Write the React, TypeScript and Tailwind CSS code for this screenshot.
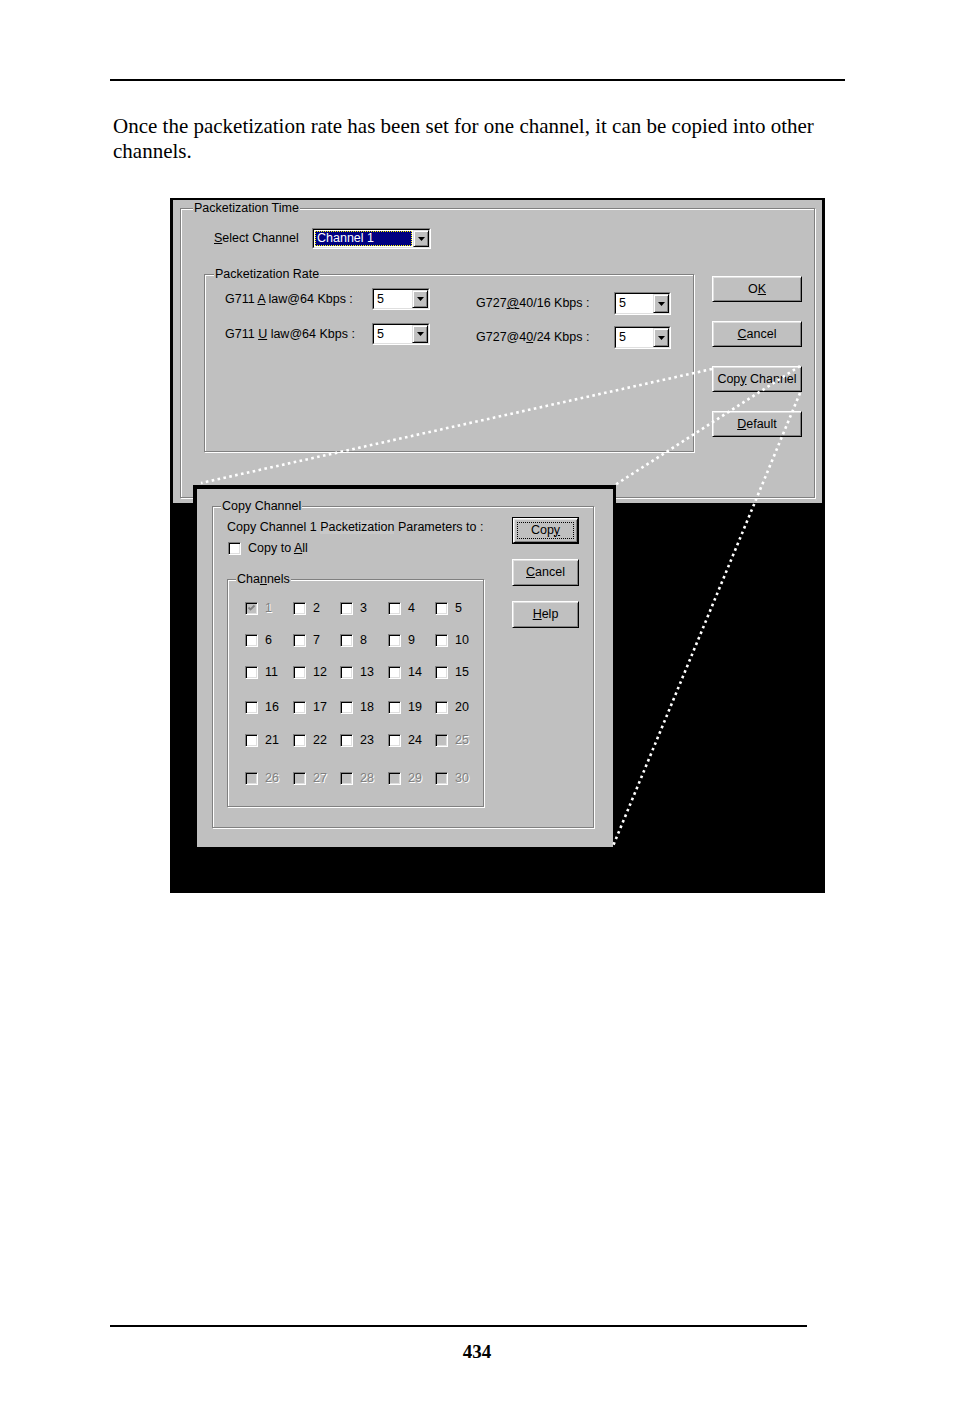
import React from 'react';

const ui = "font-['Liberation_Sans',Arial,sans-serif] text-[12.5px] leading-[15px] text-black";

function U({ children }: { children: React.ReactNode }) {
  return <span className="underline underline-offset-[1px] decoration-1">{children}</span>;
}

function Group({
  title,
  className,
  legendClass,
  children,
}: {
  title: React.ReactNode;
  className: string;
  legendClass: string;
  children?: React.ReactNode;
}) {
  return (
    <div className={`border border-[#808080] shadow-[1px_1px_0_#fff,inset_1px_1px_0_#fff] ${className}`}>
      <div className={`-mt-[8px] w-fit px-[1px] bg-[#c0c0c0] leading-[15px] ${legendClass}`}>{title}</div>
      {children}
    </div>
  );
}

function Face({ children, className }: { children: React.ReactNode; className: string }) {
  return (
    <div
      className={`flex items-center justify-center bg-[#c0c0c0] border border-t-white border-l-white border-b-black border-r-black shadow-[inset_1px_1px_0_#dfdfdf,inset_-1px_-1px_0_#808080] ${className}`}
    >
      {children}
    </div>
  );
}

function Btn({ children, size, def }: { children: React.ReactNode; size: string; def?: boolean }) {
  if (def) {
    return (
      <div className={`flex border border-black ${size}`}>
        <Face className="flex-1">
          <div className="flex-1 self-stretch m-[3px] border border-dotted border-black flex items-center justify-center">
            <span className="whitespace-nowrap">{children}</span>
          </div>
        </Face>
      </div>
    );
  }
  return (
    <Face className={size}>
      <span className="whitespace-nowrap">{children}</span>
    </Face>
  );
}

function DropBtn() {
  return (
    <div className="w-[16px] self-stretch flex items-center justify-center bg-[#c0c0c0] border border-t-[#dfdfdf] border-l-[#dfdfdf] border-b-black border-r-black shadow-[inset_1px_1px_0_#fff,inset_-1px_-1px_0_#808080]">
      <svg width="7" height="4" viewBox="0 0 7 4">
        <polygon points="0,0 7,0 3.5,4" fill="#000" />
      </svg>
    </div>
  );
}

function Sunken({ size, children }: { size: string; children: React.ReactNode }) {
  return (
    <div className={`flex border border-t-[#808080] border-l-[#808080] border-b-white border-r-white ${size}`}>
      <div className="flex flex-1 border border-t-black border-l-black border-b-[#dfdfdf] border-r-[#dfdfdf] bg-white">
        {children}
      </div>
    </div>
  );
}

function Combo({ value, size }: { value: string; size: string }) {
  return (
    <Sunken size={size}>
      <div className="flex-1 flex items-center pl-[3px]">{value}</div>
      <DropBtn />
    </Sunken>
  );
}

function Check({ checked, disabled }: { checked?: boolean; disabled?: boolean }) {
  return (
    <span
      className={`w-[13px] h-[13px] shrink-0 flex items-center justify-center border border-t-[#808080] border-l-[#808080] border-b-white border-r-white shadow-[inset_1px_1px_0_#000,inset_-1px_-1px_0_#dfdfdf] ${
        disabled ? 'bg-[#c0c0c0]' : 'bg-white'
      }`}
    >
      {checked && (
        <svg width="9" height="9" viewBox="0 0 9 9">
          <path d="M1.5 3.5 L3.5 5.5 L7.5 1.5" stroke={disabled ? '#808080' : '#000'} strokeWidth="1.8" fill="none" />
        </svg>
      )}
    </span>
  );
}

const rate = [
  { label: <>G711 <U>A</U> law@64 Kbps :</>, value: '5' },
  { label: <>G711 <U>U</U> law@64 Kbps :</>, value: '5' },
];

const rate2 = [
  { label: <>G727<U>@</U>40/16 Kbps :</>, value: '5' },
  { label: <>G727@4<U>0</U>/24 Kbps :</>, value: '5' },
];

const channels = Array.from({ length: 30 }, (_, i) => i + 1);

export default function App() {
  return (
    <div className="w-[954px] h-[1409px] bg-white overflow-hidden">
      <div className="pt-[79px] pl-[110px]">
        <div className="w-[735px] h-[2px] bg-black" />
      </div>

      <p className="ml-[113px] mt-[33px] w-[735px] font-['Liberation_Serif','Times_New_Roman',serif] text-[21px] leading-[25px] text-black">
        Once the packetization rate has been set for one channel, it can be copied into other channels.
      </p>

      {/* screenshot */}
      <div className={`relative ml-[170px] mt-[34px] w-[655px] h-[695px] bg-black overflow-hidden ${ui}`}>
        {/* main dialog */}
        <div className="ml-[3px] mt-[2px] w-[649px] h-[303px] bg-[#c0c0c0] pt-[8px] pl-[7px]">
          <Group title="Packetization Time" className="w-[635px] h-[290px]" legendClass="ml-[12px]">
            <div className="mt-[12px] pl-[33px] flex items-center">
              <div className="w-[98px]">
                <U>S</U>elect Channel
              </div>
              <Sunken size="w-[119px] h-[21px]">
                <div className="flex-1 flex p-[1px]">
                  <div className="flex-1 flex items-center bg-[#000080] text-white border border-dotted border-[#ffff00] pl-[1px]">
                    Channel 1
                  </div>
                </div>
                <DropBtn />
              </Sunken>
            </div>

            <div className="mt-[25px] pl-[23px] flex items-start">
              <Group title="Packetization Rate" className="w-[490px] h-[178px]" legendClass="ml-[9px]">
                <div className="mt-[6px] pl-[20px] flex items-start">
                  <div className="flex flex-col gap-[13px]">
                    {rate.map((r, i) => (
                      <div key={i} className="flex items-center">
                        <div className="w-[147px]">{r.label}</div>
                        <Combo value={r.value} size="w-[58px] h-[22px]" />
                      </div>
                    ))}
                  </div>
                  <div className="ml-[46px] mt-[4px] flex flex-col gap-[11px]">
                    {rate2.map((r, i) => (
                      <div key={i} className="flex items-center">
                        <div className="w-[138px]">{r.label}</div>
                        <Combo value={r.value} size="w-[57px] h-[23px]" />
                      </div>
                    ))}
                  </div>
                </div>
              </Group>

              <div className="ml-[18px] mt-[2px] flex flex-col gap-[19px]">
                <Btn size="w-[90px] h-[26px]">
                  O<U>K</U>
                </Btn>
                <Btn size="w-[90px] h-[26px]">
                  <U>C</U>ancel
                </Btn>
                <Btn size="w-[90px] h-[26px]">
                  Cop<U>y</U> Channel
                </Btn>
                <Btn size="w-[90px] h-[26px]">
                  <U>D</U>efault
                </Btn>
              </div>
            </div>
          </Group>
        </div>

        {/* copy channel dialog */}
        <div className="relative ml-[23px] -mt-[18px] w-[423px] h-[362px] bg-[#c0c0c0] border-t-4 border-l-4 border-r-[3px] border-black pt-[17px] pl-[15px]">
          <Group title="Copy Channel" className="w-[382px] h-[322px]" legendClass="ml-[8px]">
            <div className="pl-[14px] flex items-start">
              <div className="w-[257px]">
                <div className="mt-[6px] whitespace-nowrap">
                  Copy Channel 1 <span className="bg-[#c8c8c8]">Packetization</span> Parameters to :
                </div>
                <div className="mt-[7px] ml-[1px] flex items-center h-[13px]">
                  <Check />
                  <span className="ml-[7px]">
                    Copy to <U>A</U>ll
                  </span>
                </div>
                <Group
                  title={
                    <>
                      Cha<U>n</U>nels
                    </>
                  }
                  className="mt-[24px] w-[257px] h-[228px]"
                  legendClass="ml-[8px]"
                >
                  <div className="mt-[15px] pl-[17px] grid grid-cols-[48px_47px_48px_47px_48px] grid-rows-[32px_32px_35px_33px_38px_13px] items-start">
                    {channels.map((n) => {
                      const disabled = n === 1 || n >= 25;
                      return (
                        <div key={n} className="flex items-center h-[13px]">
                          <Check checked={n === 1} disabled={disabled} />
                          <span
                            className={`ml-[7px] leading-[13px] ${
                              disabled ? 'text-[#808080] [text-shadow:1px_1px_0_#fff]' : ''
                            }`}
                          >
                            {n}
                          </span>
                        </div>
                      );
                    })}
                  </div>
                </Group>
              </div>

              <div className="ml-[28px] mt-[3px] flex flex-col gap-[15px]">
                <Btn size="w-[67px] h-[27px]" def>
                  Cop<U>y</U>
                </Btn>
                <Btn size="w-[67px] h-[27px]">
                  <U>C</U>ancel
                </Btn>
                <Btn size="w-[67px] h-[27px]">
                  <U>H</U>elp
                </Btn>
              </div>
            </div>
          </Group>
        </div>

        {/* callout lines */}
        <svg className="absolute inset-0 pointer-events-none" width="655" height="695" viewBox="0 0 655 695">
          <g stroke="#fff" strokeWidth="2.6" strokeDasharray="2.6 3.4" fill="none">
            <line x1="542" y1="171" x2="31" y2="285" />
            <line x1="630" y1="168" x2="445" y2="287" />
            <line x1="630" y1="195" x2="443" y2="648" />
          </g>
        </svg>
      </div>

      <div className="mt-[432px] ml-[110px] w-[697px] h-[2px] bg-black" />
      <div className="mt-[13px] text-center font-['Liberation_Serif','Times_New_Roman',serif] font-bold text-[19px] leading-[24px] text-black">
        434
      </div>
    </div>
  );
}
